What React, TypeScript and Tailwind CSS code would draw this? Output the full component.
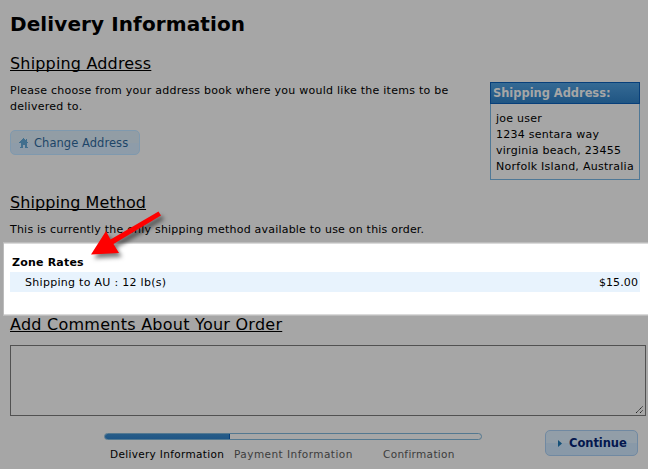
import React from "react";

function Heading({ children, className }: { children: React.ReactNode; className: string }) {
  return (
    <h2
      className={`h-[22px] pt-[2px] whitespace-nowrap text-[16px] leading-[20px] underline decoration-1 underline-offset-[1px] [text-decoration-skip-ink:none] ${className}`}
    >
      {children}
    </h2>
  );
}

function HomeIcon() {
  return (
    <svg width="10" height="10" viewBox="0 0 10 10" className="shrink-0" fill="#416f8e" shapeRendering="crispEdges">
      <path d="M4 0h1v1h1v1h1v1h1v1h1v1H0V4h1V3h1V2h1V1h1zM7 1h1v2H7z" />
      <path d="M2 5h6v5H6V7H4v3H2zM1 9h8v1H6V9H4v1H1z" />
    </svg>
  );
}

function Arrow() {
  return (
    <svg
      className="absolute left-[80px] top-[205px] drop-shadow-[3px_4px_2px_rgba(0,0,0,0.5)]"
      width="90"
      height="60"
      viewBox="0 0 90 60"
    >
      <path d="M11 49.5 26 26 30.5 34.5 78.5 6.5 81 10.5 33.5 39 39 48z" fill="#fe0000" />
    </svg>
  );
}

export default function App() {
  return (
    <div className="relative flex h-[469px] w-[648px] flex-col overflow-hidden bg-[#a6a6a6] font-['Verdana','DejaVu_Sans',sans-serif] text-[11px] leading-4 tracking-[0.26px] text-black">
      <h1 className="mt-3 ml-[10px] h-6 text-[20px] leading-6 font-bold tracking-[0.1px] whitespace-nowrap">Delivery Information</h1>

      <div className="ml-[10px] flex h-[154px] pt-4">
        <div className="w-[480px]">
          <Heading className="tracking-[0.17px]">Shipping Address</Heading>
          <p className="mt-[9px] whitespace-nowrap">
            Please choose from your address book where you would like the items to be
            <br />
            delivered to.
          </p>
          <button className="mt-[15px] flex h-[25px] w-[130px] items-center gap-[5px] rounded-[5px] border border-[#7f99ae] bg-linear-to-b from-[#929da5] from-50% to-[#8e9ca9] to-50% pl-2 text-[11.5px] tracking-[0.05px] whitespace-nowrap text-[#1d4568]">
            <HomeIcon />
            <span>Change Address</span>
          </button>
        </div>
        <div className="mt-[30px] h-[98px] w-[150px] border border-[#4f7896]">
          <div className="-mx-px -mt-px h-[22px] border border-[#073f7a] bg-linear-to-b from-[#356a94] to-[#1f5583] pl-[2px] text-[11.5px] leading-[20px] font-bold tracking-[-0.05px] whitespace-nowrap text-[#a6a6a6]">
            Shipping Address:
          </div>
          <address className="pt-[7px] pl-[5px] whitespace-nowrap not-italic">
            joe user
            <br />
            1234 sentara way
            <br />
            virginia beach, 23455
            <br />
            Norfolk Island, Australia
          </address>
        </div>
      </div>

      <div className="ml-[10px] h-[52px] pt-px">
        <Heading className="tracking-[0.08px]">Shipping Method</Heading>
        <p className="mt-[9px] tracking-[0.21px] whitespace-nowrap">
          This is currently the only shipping method available to use on this order.
        </p>
      </div>

      <section className="ml-[3px] h-[74px] border-y border-l border-[#bcbcbc] bg-white pt-[12px] pl-[6px] shadow-[inset_0_1px_0_#dadada,inset_0_-1px_0_#dadada]">
        <h3 className="h-[17px] pl-[2px] text-[11px] leading-4 font-bold tracking-[0.2px]">Zone Rates</h3>
        <div className="flex h-5 w-[630px] items-center justify-between bg-[#e8f3fd] pt-px pr-[2px] pl-[15px] whitespace-nowrap">
          <span className="tracking-[0.29px]">Shipping to AU : 12 lb(s)</span>
          <span className="tracking-[0.1px]">$15.00</span>
        </div>
      </section>

      <div className="ml-[10px] h-[29px] -mt-[3px]">
        <Heading className="tracking-[0.25px]">Add Comments About Your Order</Heading>
      </div>
      <div className="mt-[3px] ml-[10px] flex h-[71px] w-[636px] items-end justify-end border border-[#515151]">
        <svg width="9" height="9" viewBox="0 0 9 9" className="mr-px mb-px">
          <path d="M1 8 8 1M5 8 8 5" stroke="#222" strokeWidth="1" strokeDasharray="1.4 .5" />
        </svg>
      </div>

      <footer className="flex h-[53px]">
        <div className="mt-[17px] ml-[104px] w-[378px]">
          <div className="h-[7px] overflow-hidden rounded-[4px] border border-[#537890]">
            <div className="-mt-px -ml-px h-[7px] w-[126px] border-r border-[#073f7a] bg-linear-to-b from-[#2a5e88] to-[#1d5586]" />
          </div>
          <div className="mt-[6px] flex text-[10.5px] tracking-[0.32px] whitespace-nowrap text-[#3c3c3c]">
            <span className="w-[125px] pl-[6px] text-black">Delivery Information</span>
            <span className="w-[148px] pl-[5px] tracking-[0.46px]">Payment Information</span>
            <span className="pl-[6px]">Confirmation</span>
          </div>
        </div>
        <button className="mt-[14px] ml-[63px] flex h-[26px] w-[93px] items-center gap-[7px] rounded-[5px] border border-[#7089a2] bg-linear-to-b from-[#929ea8] from-50% to-[#8999a8] to-50% pl-[12px] text-[11.5px] font-bold tracking-[-0.05px] whitespace-nowrap text-[#04174e]">
          <svg width="4" height="7" viewBox="0 0 4 7" fill="#145078">
            <path d="M0 0 4 3.5 0 7z" />
          </svg>
          <span>Continue</span>
        </button>
      </footer>
      <Arrow />
    </div>
  );
}
